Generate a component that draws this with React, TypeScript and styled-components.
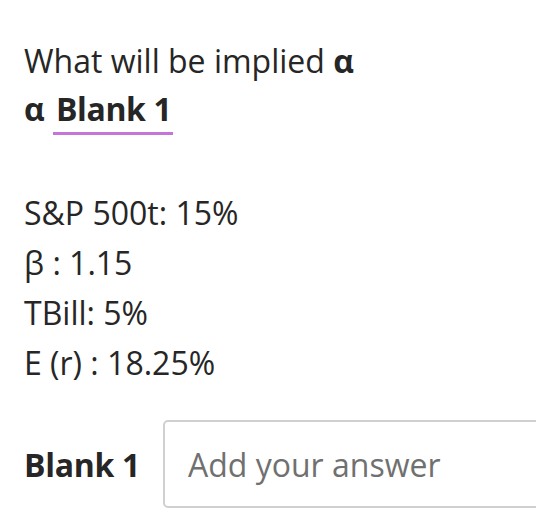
import styled, { createGlobalStyle } from "styled-components";

const GlobalStyle = createGlobalStyle`
  body {
    margin: 0;
    background: #ffffff;
    font-family: "Open Sans", "Liberation Sans", sans-serif;
    color: #262626;
  }
`;

const Page = styled.div`
  padding: 37px 0 0 24px;
  overflow: hidden;
`;

const Question = styled.p`
  margin: 0;
  font-size: 32px;
  line-height: 48px;
`;

const BlankRef = styled.span`
  display: inline-block;
  font-weight: 700;
  letter-spacing: -0.4px;
  line-height: 46px;
  padding: 0 2px 0 3px;
  border-bottom: 3px solid #c574d8;
`;

const Facts = styled.div`
  margin-top: 53px;
  font-size: 32px;
  line-height: 50px;
`;

const Fact = styled.div``;

const AnswerRow = styled.div`
  display: flex;
  align-items: center;
  gap: 23px;
  margin-top: 32px;
`;

const Label = styled.label`
  font-size: 32px;
  font-weight: 700;
  letter-spacing: -0.3px;
  white-space: nowrap;
`;

const Input = styled.input`
  flex: none;
  width: 420px;
  height: 88px;
  box-sizing: border-box;
  border: 2px solid #d0d0d0;
  border-radius: 5px;
  padding: 0 0 0 23px;
  font-family: inherit;
  font-size: 32px;
  color: #262626;
  outline: none;
  &::placeholder {
    color: #707070;
  }
`;

export default function App() {
  return (
    <>
      <GlobalStyle />
      <Page>
        <Question>
          What will be implied <b>α</b>
          <br />
          <b>α</b> <BlankRef>Blank 1</BlankRef>
        </Question>
        <Facts>
          <Fact>S&amp;P 500t: 15%</Fact>
          <Fact>β : 1.15</Fact>
          <Fact>TBill: 5%</Fact>
          <Fact>E (r) : 18.25%</Fact>
        </Facts>
        <AnswerRow>
          <Label htmlFor="blank1">Blank 1</Label>
          <Input id="blank1" placeholder="Add your answer" />
        </AnswerRow>
      </Page>
    </>
  );
}
